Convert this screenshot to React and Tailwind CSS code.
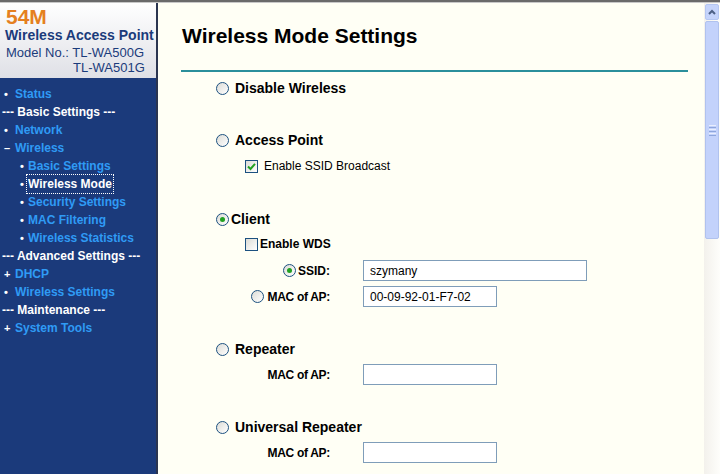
import React from "react";

const F = { fontFamily: '"Liberation Sans", Arial, sans-serif' };

function Radio({ checked }) {
  return (
    <span className="inline-flex items-center justify-center w-[13px] h-[13px] rounded-full border border-[#1c5180] bg-gradient-to-br from-[#dcdcd6] to-[#ffffff] shrink-0">
      {checked && <span className="w-[5px] h-[5px] rounded-full bg-[#21a121]" />}
    </span>
  );
}

function Check({ checked }) {
  return (
    <span className="inline-flex items-center justify-center w-[13px] h-[13px] border border-[#1c5180] bg-gradient-to-br from-[#dcdcd6] to-[#ffffff] shrink-0">
      {checked && (
        <svg width="9" height="9" viewBox="0 0 9 9">
          <path d="M1 4.5 L3.5 7 L8 1.8" stroke="#21a121" strokeWidth="2" fill="none" />
        </svg>
      )}
    </span>
  );
}

function Input({ w, value }) {
  return (
    <div
      className="h-[21px] border border-[#7f9db9] bg-white flex items-center px-[6px] text-[12px] font-normal text-black"
      style={{ width: w }}
    >
      {value}
    </div>
  );
}

function NavLink({ prefix = "•", children, sub, active }) {
  return (
    <div className={`h-[18px] flex items-center ${sub ? "pl-[20px]" : "pl-[4px]"}`}>
      <span className={`text-white ${sub ? "w-[8px]" : "w-[11px]"} text-[11px] leading-none`}>{prefix}</span>
      <span
        className={
          active
            ? "text-white outline outline-1 outline-dotted outline-white px-[1px] -ml-[1px]"
            : "text-[#2f9bf5]"
        }
      >
        {children}
      </span>
    </div>
  );
}

function NavHead({ children }) {
  return <div className="h-[18px] flex items-center pl-[2px] text-white">{children}</div>;
}

export default function App() {
  return (
    <div className="w-[720px] h-[474px] overflow-hidden flex flex-col bg-[#fffff5]" style={F}>
      <div className="h-[2px] bg-[#6a6a6a] shrink-0" />
      <div className="h-[1px] bg-[#c8c8c8] shrink-0" />
      <div className="flex flex-1 min-h-0">
        {/* Sidebar */}
        <div className="w-[158px] shrink-0 flex flex-col border-r-[2px] border-[#2b3550]">
          <div className="h-[75px] bg-gradient-to-b from-white to-[#dfe0e6] pl-[6px] pt-[4px] relative">
            <div className="text-[21px] font-bold text-[#e5801f] leading-[20px]">54M</div>
            <div className="text-[14px] font-bold text-[#1b3b7b] leading-[17px] -ml-[1px]">Wireless Access Point</div>
            <div className="text-[13px] text-[#1b3b7b] leading-[15px] mt-[1px]">Model No.: TL-WA500G</div>
            <div className="text-[13px] text-[#1b3b7b] leading-[15px] pl-[67px]">TL-WA501G</div>
          </div>
          <div className="flex-1 bg-[#1b3a7b] pt-[7px] text-[12px] font-bold">
            <NavLink>Status</NavLink>
            <NavHead>--- Basic Settings ---</NavHead>
            <NavLink>Network</NavLink>
            <NavLink prefix="–">Wireless</NavLink>
            <NavLink sub>Basic Settings</NavLink>
            <NavLink sub active>Wireless Mode</NavLink>
            <NavLink sub>Security Settings</NavLink>
            <NavLink sub>MAC Filtering</NavLink>
            <NavLink sub>Wireless Statistics</NavLink>
            <NavHead>--- Advanced Settings ---</NavHead>
            <NavLink prefix="+">DHCP</NavLink>
            <NavLink>Wireless Settings</NavLink>
            <NavHead>--- Maintenance ---</NavHead>
            <NavLink prefix="+">System Tools</NavLink>
          </div>
        </div>

        {/* Content */}
        <div className="flex-1 pl-[24px] text-black">
          <div className="pt-[21px] h-[45px] text-[21px] font-bold leading-[24px]">Wireless Mode Settings</div>
          <div className="mt-[22px] -ml-[1px] w-[507px] h-[2px] bg-[#2b8f9b]" />

          <div className="pl-[34px] text-[14px] font-bold">
            <div className="mt-[7px] h-[18px] flex items-center gap-[6px]">
              <Radio />
              <span>Disable Wireless</span>
            </div>

            <div className="mt-[34px] h-[18px] flex items-center gap-[6px]">
              <Radio />
              <span>Access Point</span>
            </div>
            <div className="mt-[8px] h-[18px] flex items-center gap-[6px] pl-[29px] text-[12px] font-normal">
              <Check checked />
              <span>Enable SSID Broadcast</span>
            </div>

            <div className="mt-[35px] h-[18px] flex items-center gap-[2px]">
              <Radio checked />
              <span>Client</span>
            </div>
            <div className="mt-[7px] h-[18px] flex items-center gap-[2px] pl-[29px] text-[12px]">
              <Check />
              <span>Enable WDS</span>
            </div>
            <div className="mt-[7px] h-[21px] flex items-center text-[12px]">
              <div className="w-[114px] flex items-center justify-end gap-[2px]">
                <Radio checked />
                <span>SSID:</span>
              </div>
              <div className="ml-[33px]">
                <Input w={224} value="szymany" />
              </div>
            </div>
            <div className="mt-[5px] h-[21px] flex items-center text-[12px]">
              <div className="w-[114px] flex items-center justify-end gap-[3px]">
                <Radio />
                <span className="tracking-[-0.3px]">MAC of AP:</span>
              </div>
              <div className="ml-[33px]">
                <Input w={134} value="00-09-92-01-F7-02" />
              </div>
            </div>

            <div className="mt-[33px] h-[18px] flex items-center gap-[6px]">
              <Radio />
              <span>Repeater</span>
            </div>
            <div className="mt-[6px] h-[21px] flex items-center text-[12px]">
              <div className="w-[114px] text-right tracking-[-0.3px]">MAC of AP:</div>
              <div className="ml-[33px]">
                <Input w={134} value="" />
              </div>
            </div>

            <div className="mt-[33px] h-[18px] flex items-center gap-[6px]">
              <Radio />
              <span>Universal Repeater</span>
            </div>
            <div className="mt-[6px] h-[21px] flex items-center text-[12px]">
              <div className="w-[114px] text-right tracking-[-0.3px]">MAC of AP:</div>
              <div className="ml-[33px]">
                <Input w={134} value="" />
              </div>
            </div>
          </div>
        </div>

        {/* Scrollbar */}
        <div className="w-[16px] shrink-0 bg-gradient-to-r from-[#f3f1ec] to-[#fefefb] flex flex-col pt-[1px] px-[1px]">
          <div className="h-[16px] rounded-[2px] bg-[#c5d4fb] border border-[#b5c7f2] flex items-center justify-center">
            <svg width="8" height="6" viewBox="0 0 8 6">
              <path d="M1 5 L4 2 L7 5" stroke="#4d6185" strokeWidth="2" fill="none" />
            </svg>
          </div>
          <div className="mt-[1px] h-[218px] rounded-[2px] bg-[#c3d2fb] border border-[#b0c2ee] flex flex-col items-center justify-center gap-[1px]">
            <div className="w-[7px] h-[1px] bg-[#e9eefd]" />
            <div className="w-[7px] h-[1px] bg-[#8ea6dc]" />
            <div className="w-[7px] h-[1px] bg-[#e9eefd]" />
            <div className="w-[7px] h-[1px] bg-[#8ea6dc]" />
            <div className="w-[7px] h-[1px] bg-[#e9eefd]" />
            <div className="w-[7px] h-[1px] bg-[#8ea6dc]" />
          </div>
        </div>
      </div>
    </div>
  );
}
